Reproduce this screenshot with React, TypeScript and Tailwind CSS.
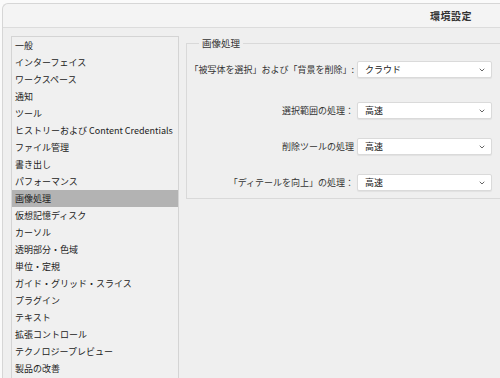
import { ChevronDown } from "lucide-react"

const items = [
  "一般",
  "インターフェイス",
  "ワークスペース",
  "通知",
  "ツール",
  "ヒストリーおよび Content Credentials",
  "ファイル管理",
  "書き出し",
  "パフォーマンス",
  "画像処理",
  "仮想記憶ディスク",
  "カーソル",
  "透明部分・色域",
  "単位・定規",
  "ガイド・グリッド・スライス",
  "プラグイン",
  "テキスト",
  "拡張コントロール",
  "テクノロジープレビュー",
  "製品の改善",
]

const selected = "画像処理"

function Select({ value }: { value: string }) {
  return (
    <div className="w-[135px] h-[17px] shrink-0 flex items-center justify-between pl-[7px] pr-[5px] bg-white border border-[#dadada] rounded-[2px] shadow-[0_1px_1px_rgba(0,0,0,0.06)] text-[#222]">
      <span>{value}</span>
      <ChevronDown className="w-[8px] h-[8px] text-[#666]" strokeWidth={3} />
    </div>
  )
}

function Row({ label, value, className }: { label: string; value: string; className?: string }) {
  return (
    <div className={"flex items-center justify-end " + (className ?? "")}>
      <span className="text-[#333] mr-[3px] whitespace-nowrap">{label}</span>
      <Select value={value} />
    </div>
  )
}

export default function App() {
  return (
    <div
      className="w-[500px] h-[378px] overflow-hidden bg-[#fafafa] pl-[2px] pt-[3px]"
      style={{ fontFamily: '"Noto Sans CJK JP", "Noto Sans", sans-serif' }}
    >
      <div className="h-[400px] w-[520px] bg-[#efefef] border-l border-t border-[#d6d6d6] rounded-tl-[6px] flex flex-col">
        <div className="h-[24px] shrink-0 bg-[#f4f4f4] border-b border-[#dcdcdc] rounded-tl-[6px] flex items-center pl-[427px]">
          <span className="text-[10px] font-bold text-[#333] tracking-[0.5px]">環境設定</span>
        </div>
        <div className="flex items-start pl-[8px] pt-[8px]">
          <div className="w-[168px] shrink-0 h-[400px] border border-[#d4d4d4] bg-[#f0f0f0] text-[9px] text-[#222]">
            {items.map((it) => (
              <div
                key={it}
                className={
                  "h-[17px] flex items-center pl-[3px] whitespace-nowrap " +
                  (it === selected ? "bg-[#b3b3b3]" : "")
                }
              >
                {it}
              </div>
            ))}
          </div>
          <fieldset className="ml-[7px] w-[323px] min-w-0 shrink-0 border border-[#d9d9d9] pl-[12px] pr-[16px] pt-[11px] pb-[7px] text-[9px]">
            <legend className="px-[3px] leading-[14px] text-[9.5px] text-[#333]">画像処理</legend>
            <Row label="「被写体を選択」および「背景を削除」:" value="クラウド" />
            <Row label="選択範囲の処理：" value="高速" className="mt-[24px]" />
            <Row label="削除ツールの処理" value="高速" className="mt-[19px]" />
            <Row label="「ディテールを向上」の処理：" value="高速" className="mt-[19px]" />
          </fieldset>
        </div>
      </div>
    </div>
  )
}
